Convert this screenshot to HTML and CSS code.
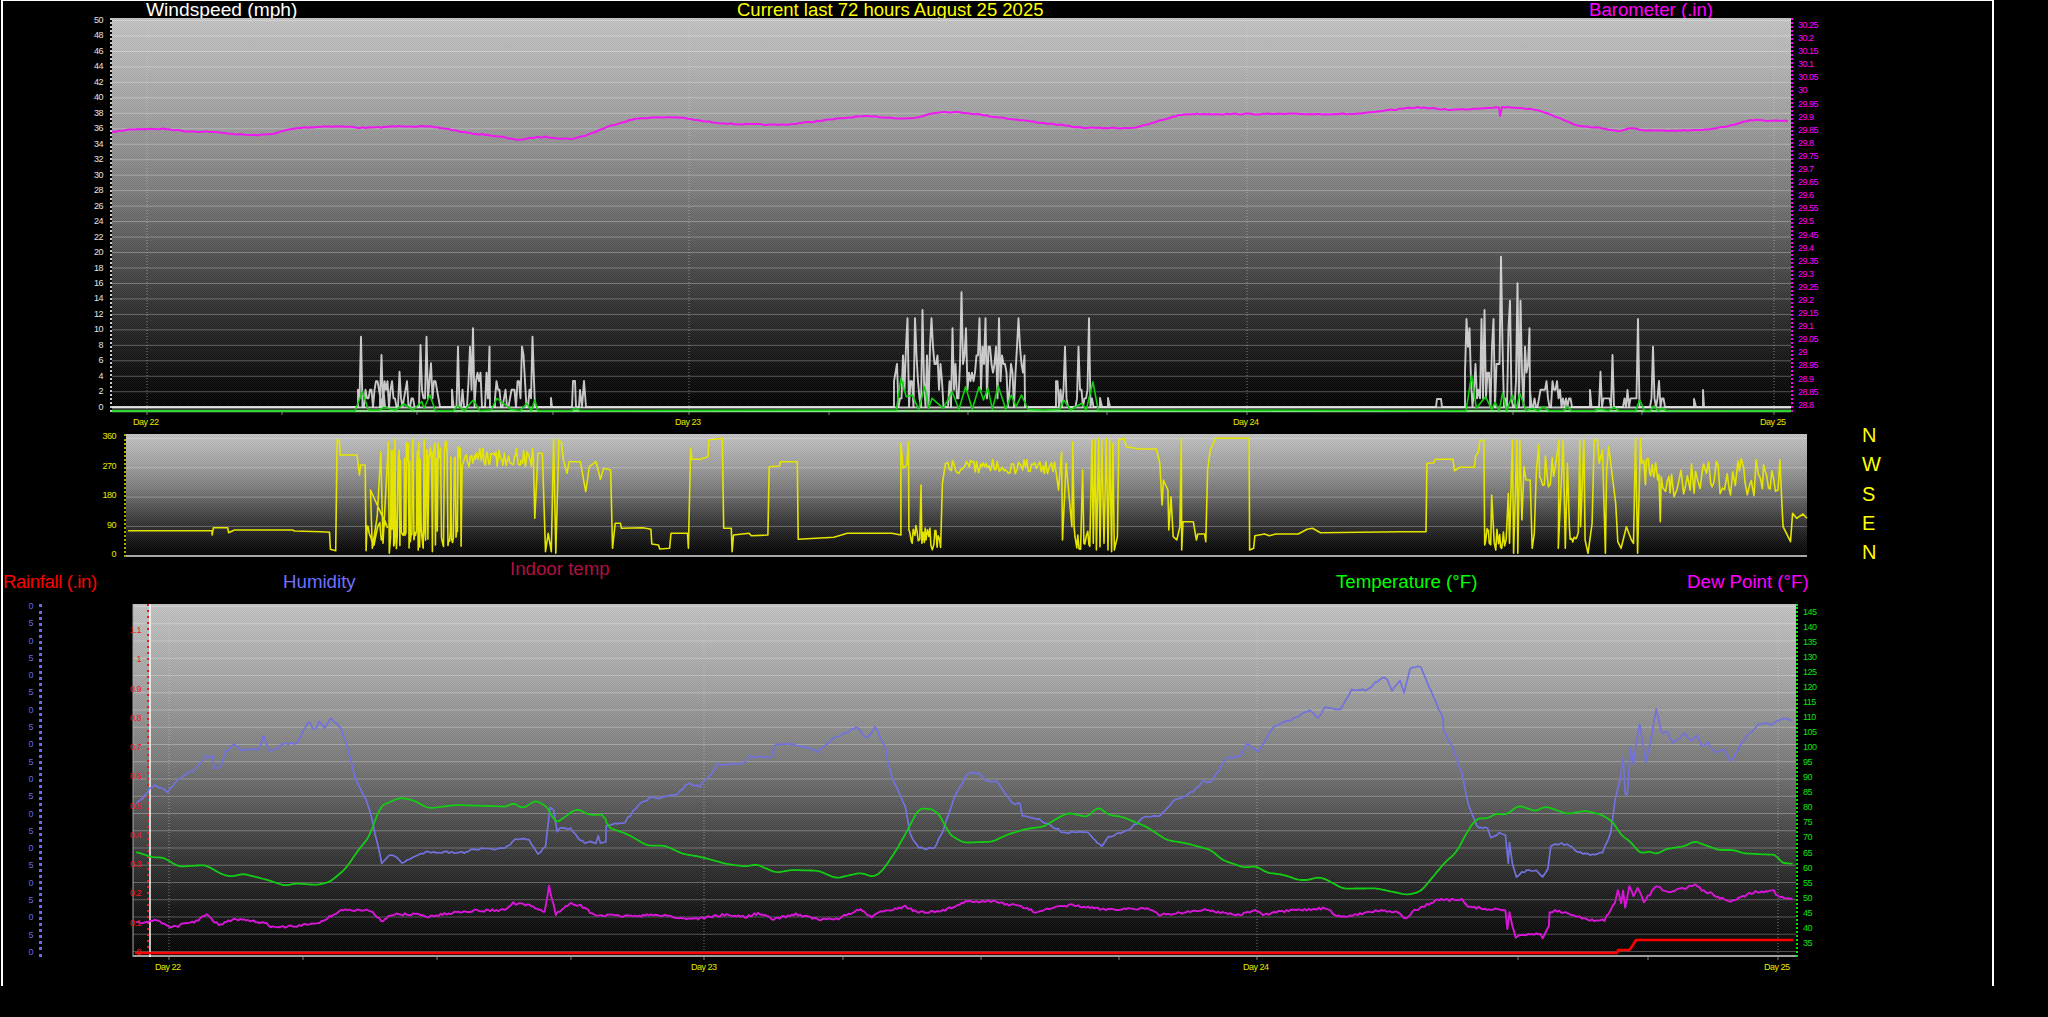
FILE: index.html
```html
<!DOCTYPE html>
<html lang="en">
<head>
    <meta charset="UTF-8">
    <title>Current last 72 hours August 25 2025</title>
    <link rel="stylesheet" href="styles.css">
</head>
<body>
    <div class="frame">
        <div class="title-row">
            <span class="windspeed">Windspeed (mph)</span>
            <span class="current">Current last 72 hours August 25 2025</span>
            <span class="barometer">Barometer (.in)</span>
        </div>

        <div class="chart chart-wind">
            <div class="axis axis-wind"><div class="labels" id="labels-wind"></div></div>
            <div class="plot plot-wind"><svg id="svg-wind" viewBox="112 18 1679 394"></svg></div>
            <div class="axis axis-baro"><div class="labels" id="labels-baro"></div></div>
        </div>
        <div class="day-row day-row-top">
            <span>Day 22</span><span>Day 23</span><span>Day 24</span><span>Day 25</span>
        </div>

        <div class="chart chart-dir">
            <div class="axis axis-dir"><div class="labels" id="labels-dir"></div></div>
            <div class="plot plot-dir"><svg id="svg-dir" viewBox="126 434 1681 123"></svg></div>
            <div class="compass"><span>N</span><span>W</span><span>S</span><span>E</span><span>N</span></div>
        </div>

        <div class="legend-row">
            <span class="rainfall">Rainfall (.in)</span>
            <span class="humidity">Humidity</span>
            <span class="indoor">Indoor temp</span>
            <span class="temperature">Temperature (°F)</span>
            <span class="dewpoint">Dew Point (°F)</span>
        </div>

        <div class="chart chart-temp">
            <div class="axis axis-hum"><div class="labels" id="labels-hum"></div></div>
            <div class="plot plot-temp">
                <svg id="svg-temp" viewBox="133 604 1663 353"></svg>
                <div class="labels labels-rain" id="labels-rain"></div>
            </div>
            <div class="axis axis-temp"><div class="labels" id="labels-temp"></div></div>
        </div>
        <div class="day-row day-row-bottom">
            <span>Day 22</span><span>Day 23</span><span>Day 24</span><span>Day 25</span>
        </div>
    </div>
    <script src="script.js"></script>
</body>
</html>
```
FILE: styles.css
```css
* {
    box-sizing: border-box;
}
body {
    margin: 0;
    background: #000;
    font-family: "Liberation Sans", Arial, sans-serif;
}
.frame {
    width: 1993px;
    height: 986px;
    margin-left: 1px;
    border: 2px solid #fff;
    border-top-width: 1px;
    border-bottom: none;
    overflow: hidden;
}
.title-row {
    display: grid;
    grid-template-columns: 591px 852px auto;
    height: 17px;
    padding-left: 143px;
    font-size: 18.6px;
    line-height: 18px;
    white-space: nowrap;
}
.windspeed {
    color: #fff;
    font-size: 19.2px;
}
.current {
    color: #ffff00;
    font-size: 18.5px;
}
.barometer {
    color: #ff00ff;
}

.chart {
    display: flex;
}
.chart-wind {
    height: 394px;
}
.chart-dir {
    height: 123px;
}
.chart-temp {
    height: 353px;
}
.plot {
    position: relative;
    background-color: #000;
    background-image:
        repeating-conic-gradient(rgba(255, 255, 255, 0.05) 0 25%, rgba(0, 0, 0, 0.05) 0 50%),
        linear-gradient(rgba(255, 255, 255, 0.3) 1px, transparent 1px),
        linear-gradient(#c4c4c4 0, #a2a2a2 24%, #7c7c7c 44%, #525252 60%, #2e2e2e 75%, #131313 88%, #000 100%);
    background-size: 2px 2px, 100% var(--grid), 100% 100%;
    background-position: 0 0, 0 var(--grid-top), 0 0;
}
.plot svg {
    position: absolute;
    inset: 0;
    width: 100%;
    height: 100%;
    overflow: visible;
    filter: blur(0.35px);
}
.plot-wind {
    width: 1679px;
    --grid: 15.48px;
    --grid-top: 2px;
}
.plot-dir {
    width: 1681px;
    --grid: 29.3px;
    --grid-top: 4px;
}
.plot-temp {
    width: 1663px;
    margin-left: 91px;
    --grid: 17.25px;
    --grid-top: 2px;
}

.axis {
    flex: none;
    font-size: 9px;
    line-height: 10px;
    letter-spacing: -0.5px;
}
.labels {
    display: flex;
    flex-direction: column;
    justify-content: space-between;
    white-space: nowrap;
}
.axis-wind {
    width: 109px;
    padding-right: 7px;
    border-right: 2px dotted #c8c8c8;
    color: #e4e4e4;
}
.axis-wind .labels {
    align-items: flex-end;
    height: 397px;
    margin-top: -3px;
}
.axis-baro {
    padding-left: 5px;
    border-left: 2px dotted #ff00ff;
    color: #ff00ff;
}
.axis-baro .labels {
    height: 390px;
    margin-top: 2px;
}
.axis-dir {
    width: 123px;
    padding-right: 8px;
    border-right: 2px dotted #a8a800;
    color: #e8e800;
}
.axis-dir .labels {
    align-items: flex-end;
    height: 128px;
    margin-top: -3px;
}
.axis-hum {
    width: 39px;
    padding-right: 6px;
    border-right: 3px dotted #6a6ae8;
    color: #6a6ae0;
}
.axis-hum .labels {
    align-items: flex-end;
    height: 356px;
    margin-top: -3px;
}
.axis-temp {
    padding-left: 5px;
    border-left: 2px dotted #10e010;
    color: #10e010;
}
.axis-temp .labels {
    height: 341px;
    margin-top: 3px;
}
.labels-rain {
    position: absolute;
    top: 21px;
    left: 0;
    width: 8px;
    height: 332px;
    align-items: flex-end;
    color: #f01818;
    font-size: 9px;
    line-height: 10px;
    letter-spacing: -0.5px;
}

.compass {
    display: flex;
    flex-direction: column;
    justify-content: space-between;
    height: 137px;
    margin: -9px 0 0 55px;
    color: #ffff00;
    font-size: 20px;
    line-height: 20px;
}

.day-row {
    display: grid;
    font-size: 9px;
    letter-spacing: -0.5px;
    color: #e8e800;
    white-space: nowrap;
}
.day-row-top {
    grid-template-columns: 542px 558px 527px auto;
    height: 22px;
    padding-left: 130px;
    line-height: 20px;
}
.day-row-bottom {
    grid-template-columns: 536px 552px 521px auto;
    padding-left: 152px;
    line-height: 20px;
}

.legend-row {
    display: grid;
    grid-template-columns: 280px 227px 826px 351px auto;
    align-items: end;
    height: 47px;
    padding-bottom: 11px;
    font-size: 18.7px;
    line-height: 22px;
    white-space: nowrap;
}
.rainfall {
    color: #ff0000;
    letter-spacing: -0.42px;
}
.humidity {
    color: #7070ff;
}
.indoor {
    margin-bottom: 13px;
    color: #b01040;
}
.temperature {
    color: #00ff00;
}
.dewpoint {
    color: #ff00ff;
}
```
FILE: script.js
```js
// small seeded random so every render looks the same
let seed = 7;
function rnd() {
    seed = (seed * 16807) % 2147483647;
    return seed / 2147483647;
}

function fillLabels(id, values) {
    const box = document.getElementById(id);
    values.forEach(v => {
        const span = document.createElement('span');
        span.textContent = v;
        box.appendChild(span);
    });
}

function range(from, to, step) {
    const out = [];
    const n = Math.round((to - from) / step);
    for (let i = 0; i <= n; i++) {
        out.push(Number((from + i * step).toFixed(2)));
    }
    return out;
}

fillLabels('labels-wind', range(50, 0, -2));
fillLabels('labels-baro', range(30.25, 28.8, -0.05));
fillLabels('labels-dir', [360, 270, 180, 90, 0]);
fillLabels('labels-hum', range(100, 0, -5).map(v => v % 10));
fillLabels('labels-rain', range(1.1, 0, -0.1));
fillLabels('labels-temp', range(145, 35, -5));

// traced points come from crops of the chart, so each list has an origin and x scale.
// [x, y] is a point; [x0, x1, lo, hi, step] is noise; a 6th value makes it jump between both ends
function trace(ox, oy, sx, list) {
    const out = [];
    list.forEach(p => {
        if (p.length === 2) {
            out.push([ox + p[0] / sx, oy + p[1] / 3]);
            return;
        }
        const [x0, x1, lo, hi, step, band] = p;
        for (let x = x0; x < x1; x += step * (0.6 + rnd() * 0.8)) {
            let y = lo + rnd() * (hi - lo);
            if (band) {
                y = rnd() < 0.5 ? lo + rnd() * band : hi - rnd() * band;
            }
            out.push([ox + x / sx, oy + y / 3]);
        }
    });
    return out;
}

function densify(pts, step) {
    const out = [];
    for (let i = 0; i < pts.length - 1; i++) {
        const [x0, y0] = pts[i];
        const [x1, y1] = pts[i + 1];
        const n = Math.max(1, Math.round((x1 - x0) / step));
        for (let k = 0; k < n; k++) {
            out.push([x0 + (x1 - x0) * k / n, y0 + (y1 - y0) * k / n]);
        }
    }
    out.push(pts[pts.length - 1]);
    return out;
}

function smooth(pts, r) {
    return pts.map((p, i) => {
        let sum = 0, n = 0;
        for (let k = Math.max(0, i - r); k <= Math.min(pts.length - 1, i + r); k++) {
            sum += pts[k][1];
            n++;
        }
        return [p[0], sum / n];
    });
}

function jitter(pts, amp) {
    return pts.map(p => [p[0], p[1] + (rnd() - 0.5) * amp]);
}

function line(svg, pts, color, width, opacity) {
    const el = document.createElementNS('http://www.w3.org/2000/svg', 'polyline');
    el.setAttribute('points', pts.map(p => p[0].toFixed(1) + ',' + p[1].toFixed(1)).join(' '));
    el.setAttribute('fill', 'none');
    el.setAttribute('stroke', color);
    el.setAttribute('stroke-width', width);
    el.setAttribute('stroke-linejoin', 'round');
    if (opacity) el.setAttribute('opacity', opacity);
    svg.appendChild(el);
    return el;
}

function dayLines(svg, xs, top, bottom) {
    xs.forEach(x => {
        const el = line(svg, [[x, top], [x, bottom]], '#d0d0d0', 1, 0.55);
        el.setAttribute('stroke-dasharray', '1 2');
    });
}

function ticks(svg, xs, y) {
    xs.forEach(x => line(svg, [[x, y], [x, y + 3]], '#808080', 1));
}

// ---- windspeed and barometer ----
const svgWind = document.getElementById('svg-wind');
dayLines(svgWind, [147, 689, 1247, 1774], 18, 412);
ticks(svgWind, [147, 282, 417, 553, 689, 829, 968, 1107, 1247, 1513, 1642, 1774], 412);
line(svgWind, [[112, 407.5], [1791, 407.5]], '#c4c4c4', 2);

const baro = [[112,133],[129,129],[172,129],[188,132],[201,131],[246,135],[268,135],[295,128],[335,126],[366,128],[402,126],[437,127],[473,134],[491,135],[522,141],[531,137],[554,137],[567,140],[585,136],[612,125],[638,118],[679,117],[700,121],[731,124],[784,125],[862,116],[914,119],[934,112],[960,112],[1019,120],[1084,128],[1136,128],[1182,114],[1293,114],[1358,114],[1400,109],[1412,107],[1454,110],[1499,107]];
const baroEnd = [[1502,107],[1524,108],[1545,112],[1578,126],[1602,128],[1621,132],[1629,127],[1638,130],[1664,131],[1708,130],[1718,127],[1731,126],[1747,120],[1788,121]];
line(svgWind, jitter(smooth(densify(baro, 3), 3), 1).concat([[1500,116]], jitter(smooth(densify(baroEnd, 3), 2), 1)), '#f018f0', 2);

function gusts(x0, x1, maxK, peaks, power) {
    const out = [];
    for (let x = x0; x < x1; x += 1.5) {
        const k = Math.floor(Math.pow(rnd(), power || 1.5) * (maxK + 1));
        out.push([x, 407 - k * 8.6]);
    }
    peaks.forEach(p => {
        let best = out[0];
        out.forEach(q => {
            if (Math.abs(q[0] - p[0]) < Math.abs(best[0] - p[0])) best = q;
        });
        best[1] = p[1];
    });
    return [[x0, 407]].concat(out, [[x1, 407]]);
}

const peaksA = trace(0, 0, 2.24, [[810,1010],[853,1065],[895,1115],[943,1035],[957,1010],[967,1090],[1025,1040],[1052,1040],[1059,985],[1105,1065],[1110,903],[1118,1040],[1168,1040],[1173,1065],[1193,1010]]);
const peaksB = trace(700, 250, 2.24, [[465,205],[480,205],[498,180],[520,205],[565,235],[587,127],[595,235],[625,205],[640,205],[670,205],[712,205]]);
const peaksC = trace(1400, 0, 2.42, [[162,957],[170,985],[197,957],[205,930],[228,957],[243,770],[262,985],[268,902],[283,850],[292,902],[312,1010],[343,1090],[365,1143],[398,985]]);
const wind = [[112, 407]].concat(
    gusts(358, 385, 3, peaksA.slice(0, 1)), gusts(380, 440, 3, peaksA.slice(1, 6)), gusts(452, 490, 4, peaksA.slice(6, 12)),
    gusts(495, 535, 3, peaksA.slice(12)),
    [[551, 407], [551, 398], [552, 407], [572, 407], [573, 381], [575, 381], [576, 407], [579, 407], [580, 390], [582, 407], [584, 381], [586, 407]],
    gusts(894, 1025, 7, peaksB, 1.05),
    gusts(1056, 1096, 3, trace(700, 250, 2.24, [[817,290],[847,290],[872,205]])),
    [[1100, 407], [1100, 398], [1102, 407], [1108, 407], [1108, 398], [1110, 407]],
    [[1436, 407], [1437, 399], [1441, 399], [1442, 407], [1464, 407]],
    gusts(1465, 1530, 7, peaksC, 1.2), gusts(1530, 1572, 3, []),
    gusts(1590, 1665, 1, trace(1400, 0, 2.42, [[460,1170],[485,1115],[513,1065],[550,1170],[575,957],[612,1040],[628,1143]])),
    [[1694, 407], [1694, 399], [1696, 407], [1703, 407], [1703, 390], [1704, 407], [1791, 407]]
);
line(svgWind, wind, '#e8e8e8', 1.9, 0.85);

line(svgWind, [[112, 411], [1791, 411]], '#8ee08e', 2.5);
const windAvg = [[112,411]].concat(
    trace(0, 0, 2.24, [[795,1233],[812,1175],[825,1230],[850,1230],[860,1222],[885,1230],[905,1212],[925,1230],[945,1205],[950,1225],[963,1185],[975,1232],[1015,1232],[1025,1217],[1040,1232],[1060,1200],[1075,1232],[1100,1230],[1113,1195],[1145,1228],[1165,1232],[1180,1210],[1190,1232],[1198,1200],[1205,1232],[1280,1232],[1290,1225],[1300,1232]]),
    trace(700, 250, 2.24, [[440,480],[450,385],[462,440],[475,435],[490,478],[503,410],[512,475],[520,445],[545,475],[565,425],[580,478],[595,410],[610,478],[625,410],[635,450],[645,415],[655,478],[668,408],[685,478],[697,435],[708,470],[720,435],[735,478],[770,480],[805,478],[815,450],[830,480],[855,460],[865,480],[880,395],[892,480]]),
    trace(1400, 0, 2.42, [[160,1232],[173,1125],[185,1225],[207,1190],[222,1228],[230,1207],[240,1232],[248,1180],[258,1232],[272,1185],[282,1225],[290,1180],[305,1232],[320,1225],[335,1232],[347,1220],[360,1232],[395,1232],[405,1220],[415,1232],[470,1232],[480,1226],[505,1232],[518,1222],[530,1232],[570,1232],[580,1200],[592,1232],[605,1232],[615,1218],[625,1232],[635,1225],[645,1232]]),
    [[1791, 411]]
);
line(svgWind, windAvg, '#10d010', 1.6);

// ---- wind direction ----
const svgDir = document.getElementById('svg-dir');
line(svgDir, [[126, 556], [1807, 556]], '#a8a8a8', 2);

const dirLeft = trace(0, 420, 2.24, [[287,332],[475,332],[475,345],[478,323],[510,323],[512,338],[525,330],[655,330],[660,333],[720,335],[738,337],[740,388],[752,392],[755,60],[760,60],[762,105],[800,105],[805,165],[808,135],[818,135],[820,392],
    [822,868,300,390,4],[830,210],[834,385],[845,290],[853,95],[858,370],[870,65],[872,400],
    [875,1033,55,395,1.7,70],
    [1035,1195,85,140,3],[1198,295],[1205,100],[1215,100],[1222,395],[1228,340],[1235,395],[1240,55],[1245,400],[1252,60],[1258,70],[1262,120],[1270,160],[1275,125],[1300,125],[1312,215],[1320,140],[1335,125],[1345,178],[1352,145],[1368,150],[1372,385],[1378,310],[1390,310],[1392,325],[1440,323],[1458,328],[1460,372],[1475,375],[1478,387],[1500,385],[1503,340],[1540,340],[1542,385],[1547,85],[1550,118],[1568,118]]);
const dirMid = trace(700, 250, 2.24, [[18,620],[20,570],[50,565],[53,835],[70,835],[72,905],[75,855],[110,850],[115,857],[152,855],[155,650],[178,648],[180,635],[218,635],[220,868],[300,862],[330,850],[430,850],[450,855],[450,580],[455,655],[463,645],[467,575],[468,840],
    [470,493,825,895,3],[495,705],[497,880],[500,540,825,905,3],[543,700],[550,640],
    [552,800,628,672,3.5],[803,720],[810,605],[812,870],[820,640],[833,830],[835,575],[838,830],
    [840,855,830,910,3],[857,660],[860,880],[862,876,830,910,3],[878,570],[881,880],[885,570],[888,900],[893,565],[896,890],[900,570],[905,880],[910,565],[914,900],[918,570],[922,905],[925,580],[928,900],
    [935,860],[938,570],[950,565],[955,590],[985,597],[1022,597],[1030,640],[1035,765],[1038,690],[1048,720],[1050,840],[1055,740],[1060,860],[1068,870],[1075,830],[1078,565],[1079,900],[1082,815],[1105,815],[1112,870],[1115,852],[1130,852],[1133,875],[1137,660],[1143,600],[1155,565],[1230,565],[1231,900],[1240,895],[1243,857],[1265,852],[1275,857],[1290,852],[1340,852],[1360,838],[1372,835],[1390,848],[1568,845]]);
const dirRight = trace(1400, 420, 2.42, [[0,335],[63,335],[65,130],[82,128],[85,118],[128,118],[132,152],[145,142],[180,142],[183,110],[190,95],[193,62],[203,60],[205,375],
    [207,220,310,380,3],[222,225],[225,300],[228,260,320,395,3],[262,220],[265,370],[272,60],[275,400],[283,60],[285,400],[290,60],[295,300],[300,140],[305,180],[315,180],[320,385],[325,340],[330,150],[336,75],
    [338,380,100,205,3.5],[385,60],[383,385],[395,60],[400,385],[405,130],[410,320],
    [412,432,320,390,3],[435,60],[437,320],[445,60],[448,360],[455,400],[465,310],[470,60],[478,60],[482,130],[490,90],[497,400],[500,150],[505,80],[515,180],[522,250],[527,365],[535,385],[548,320],[560,360],[565,370],[570,55],[575,400],[582,55],[585,130],
    [590,628,115,205,3.5],[630,305],[632,170],[636,920,115,232,5],[925,270],[927,320],[945,365],[950,280],[960,295],[975,282],[985,295]]);
line(svgDir, dirLeft.concat(dirMid, dirRight), '#e4e400', 1.6);

// ---- temperature, humidity, dew point, rain ----
const svgTemp = document.getElementById('svg-temp');
dayLines(svgTemp, [169, 704, 1257, 1778], 604, 957);
ticks(svgTemp, [169, 303, 437, 571, 704, 843, 981, 1119, 1257, 1518, 1648, 1778], 957);
line(svgTemp, [[133, 604], [133, 957]], '#a8a8a8', 1);
line(svgTemp, [[133, 956], [1796, 956]], '#a0a0a0', 2);
const rainAxis = line(svgTemp, [[148, 604], [148, 957]], '#f01818', 2);
rainAxis.setAttribute('stroke-dasharray', '2 4');
line(svgTemp, [[150, 604], [150, 957]], '#ffffff', 1.5);

const humidity = trace(0, 700, 2.24, [[305,310],[320,295],[335,265],[350,255],[375,275],[400,235],[435,210],[460,170],[475,170],[480,205],[495,200],[505,155],[525,130],[540,150],[580,145],[590,110],[605,155],[640,130],[665,130],[690,65],[705,90],[715,65],[727,85],[742,55],[765,90],[780,150],[795,230],[820,300],[830,340],[845,430],[855,488],[870,468],[885,468],[900,488],[930,470],[955,455],[1040,458],[1055,447],[1130,447],[1155,420],[1185,417],[1205,465],[1222,440],[1232,325],[1240,330],[1248,395],[1255,385],[1278,385],[1295,415],[1310,427],[1335,427],[1340,405],[1345,427],[1357,427],[1358,380],[1400,365],[1430,315],[1455,295],[1480,295],[1520,280],[1540,250]]).concat(
    trace(700, 650, 2.24, [[0,410],[15,385],[40,345],[95,340],[110,320],[160,320],[170,280],[220,285],[265,305],[300,265],[350,230],[375,265],[392,230],[415,295],[430,385],[460,470],[470,550],[490,595],[525,595],[545,540],[570,440],[600,370],[625,370],[640,395],[665,395],[700,460],[717,462],[722,495],[760,510],[790,530],[815,548],[870,548],[885,570],[900,590],[915,560],[960,540],[990,505],[1030,497],[1060,455],[1105,425],[1125,395],[1145,395],[1180,325],[1210,320],[1225,280],[1250,305],[1285,230],[1330,205],[1365,180],[1385,205],[1400,170],[1435,178],[1460,118],[1490,120],[1535,80],[1550,120]]),
    [[1400,680],[1404,692],[1410,668],[1421,667],[1429,687],[1443,718]],
    trace(1400, 700, 2.42, [[105,90],[130,150],[150,220],[165,310],[180,360],[190,383],[212,385],[220,415],[240,400],[255,405],[262,490],[265,425],[272,490],[282,530],[295,515],[330,510],[345,530],[358,505],[365,440],[378,430],[410,435],[430,455],[460,465],[490,455],[510,400],[520,300],[527,265],[533,240],[540,170],[545,280],[550,285],[558,140],[565,195],[570,140],[580,75],[595,185],[610,100],[620,25],[632,95],[648,100],[660,130],[690,100],[705,125],[718,105],[730,140],[745,130],[760,155],[785,150],[800,185],[835,115],[868,72],[900,72],[925,55],[950,62]])
);
line(svgTemp, jitter(densify(humidity, 2.5), 2.2), '#7272de', 1.7);

const temperature = trace(0, 700, 2.24, [[305,455],[340,472],[365,472],[400,500],[460,495],[500,525],[525,530],[540,520],[600,540],[640,558],[660,550],[710,555],[740,545],[775,505],[800,455],[830,405],[850,320],[895,293],[925,300],[960,325],[1020,315],[1140,320],[1148,305],[1170,327],[1200,300],[1230,325],[1243,372],[1292,325],[1320,345],[1357,343],[1358,380],[1405,402],[1450,437],[1490,437],[1530,462]]).concat(
    trace(700, 650, 2.24, [[0,620],[60,642],[105,650],[125,642],[170,668],[205,660],[265,662],[305,685],[360,668],[390,682],[410,660],[440,600],[465,540],[490,475],[525,478],[545,510],[555,550],[590,578],[655,575],[690,553],[730,537],[770,530],[800,505],[825,488],[870,502],[890,468],[915,495],[945,500],[1000,530],[1045,570],[1090,580],[1145,600],[1170,630],[1220,653],[1245,648],[1270,668],[1310,675],[1340,690],[1365,690],[1385,680],[1405,690],[1440,716],[1515,715]]),
    trace(1400, 700, 2.42, [[0,580],[15,585],[50,575],[80,530],[110,485],[135,460],[165,390],[185,355],[215,355],[233,338],[245,345],[265,340],[285,315],[330,335],[350,318],[405,342],[450,332],[490,345],[520,370],[535,410],[550,415],[585,465],[600,450],[620,465],[640,448],[695,437],[710,422],[770,450],[810,450],[830,460],[915,465],[918,487],[950,492]])
);
line(svgTemp, smooth(densify(temperature, 2), 2), '#14cc14', 1.8);

const dew = trace(0, 700, 2.24, [[305,670],[350,660],[385,682],[435,665],[463,645],[490,675],[525,658],[590,668],[615,683],[670,678],[720,665],[765,630],[830,632],[845,650],[858,665],[870,645],[930,642],[960,650],[1040,633],[1130,630],[1150,610],[1190,618],[1220,635],[1230,560],[1245,642],[1280,608],[1305,620],[1330,645],[1400,648],[1490,645],[1520,655]]).concat(
    trace(700, 650, 2.24, [[0,805],[50,795],[105,800],[130,790],[165,808],[215,792],[270,810],[310,805],[360,778],[385,805],[400,785],[460,770],[490,788],[540,785],[600,752],[660,755],[720,770],[750,785],[830,765],[900,778],[1000,775],[1030,795],[1130,780],[1210,795],[1240,780],[1265,795],[1300,785],[1400,775],[1435,803],[1500,785],[1530,780]]),
    trace(1400, 700, 2.42, [[0,640],[15,658],[30,635],[90,600],[150,600],[165,620],[220,628],[255,630],[260,685],[265,635],[272,680],[280,710],[340,700],[345,715],[360,680],[362,635],[380,632],[430,650],[480,665],[495,660],[520,610],[527,570],[535,610],[540,570],[545,625],[555,560],[565,590],[575,565],[590,605],[620,560],[650,575],[690,565],[715,550],[730,570],[770,590],[795,605],[860,575],[905,572],[915,590],[950,597]])
);
line(svgTemp, jitter(densify(dew, 2), 2.4), '#d816d8', 1.9);

line(svgTemp, [[135, 953], [1617, 953], [1618, 950], [1629, 950], [1631, 948], [1636, 940], [1793, 940]], '#ff0000', 2.6);
```
